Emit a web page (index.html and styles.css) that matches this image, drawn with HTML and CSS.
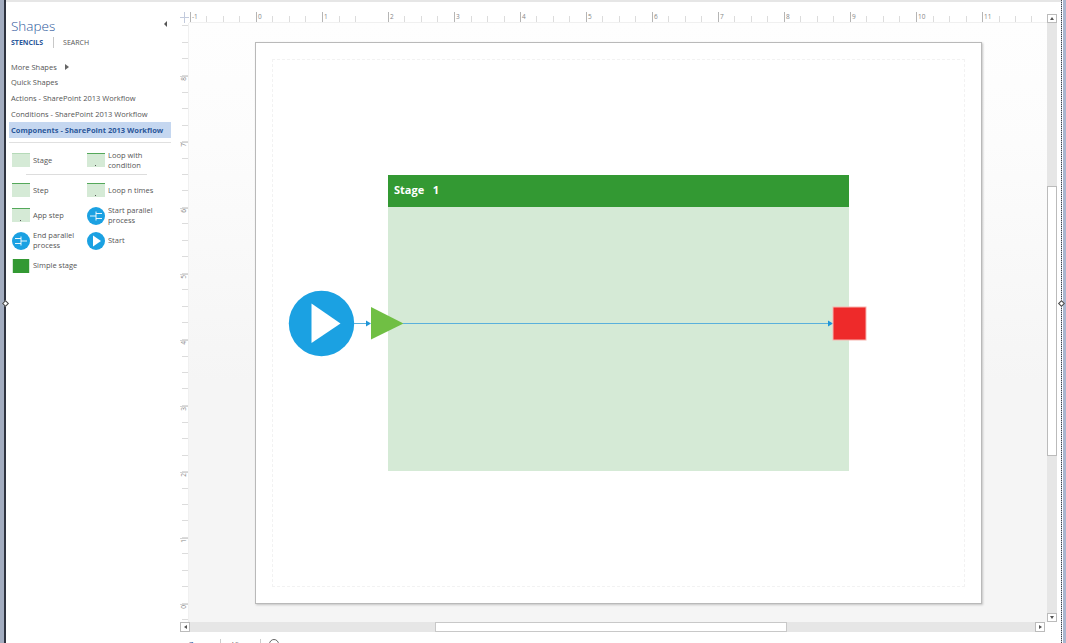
FILE: index.html
```html
<!DOCTYPE html>
<html>
<head>
    <title>Shapes - Workflow</title>
    <link rel="stylesheet" href="styles.css">
</head>
<body>
    <svg class="defs" width="0" height="0">
        <defs>
            <g id="box">
                <rect x="0" y="0" width="18" height="14" fill="#d5ead6"/>
                <rect x="0" y="0" width="18" height="1" fill="#b5dab8"/>
            </g>
            <g id="step">
                <rect x="0" y="1" width="18" height="13" fill="#d5ead6"/>
                <rect x="0" y="0" width="18" height="1" fill="#54a85a"/>
            </g>
            <g id="loop">
                <rect x="0" y="1" width="18" height="13" fill="#d5ead6"/>
                <rect x="0" y="0" width="18" height="1" fill="#54a85a"/>
                <rect x="8" y="12" width="1" height="1" fill="#555"/>
            </g>
        </defs>
    </svg>

    <div class="app">
        <div class="frame-left"></div>

        <div class="sidebar">
            <h1 class="title">Shapes</h1>
            <div class="tabs">
                <span class="tab tab-active">STENCILS</span>
                <span class="tab">SEARCH</span>
            </div>
            <span class="collapse"></span>

            <ul class="stencils">
                <li class="stencil">More Shapes <i class="more-arrow"></i></li>
                <li class="stencil">Quick Shapes</li>
                <li class="stencil">Actions - SharePoint 2013 Workflow</li>
                <li class="stencil">Conditions - SharePoint 2013 Workflow</li>
                <li class="stencil stencil-active">Components - SharePoint 2013 Workflow</li>
            </ul>

            <div class="masters">
                <div class="master">
                    <svg class="master-icon" width="18" height="15"><use href="#box"/></svg>
                    <span>Stage</span>
                </div>
                <div class="master">
                    <svg class="master-icon" width="18" height="15"><use href="#loop"/></svg>
                    <span>Loop with condition</span>
                </div>
                <div class="master-rule"></div>
                <div class="master">
                    <svg class="master-icon" width="18" height="15"><use href="#step"/></svg>
                    <span>Step</span>
                </div>
                <div class="master">
                    <svg class="master-icon" width="18" height="15"><use href="#loop"/></svg>
                    <span>Loop n times</span>
                </div>
                <div class="master">
                    <svg class="master-icon" width="18" height="15"><use href="#loop"/></svg>
                    <span>App step</span>
                </div>
                <div class="master">
                    <svg class="master-icon" width="18" height="18">
                        <circle cx="9" cy="9" r="9" fill="#1ba1e2"/>
                        <path d="M3 9 H9 M9 6.5 H15 M9 11.5 H15 M9 4.5 V13.5" stroke="#fff" stroke-width="0.9" fill="none"/>
                    </svg>
                    <span>Start parallel process</span>
                </div>
                <div class="master">
                    <svg class="master-icon" width="18" height="18">
                        <circle cx="9" cy="9" r="9" fill="#1ba1e2"/>
                        <path d="M3 6.5 H9 M3 11.5 H9 M9 9 H15 M9 4.5 V13.5" stroke="#fff" stroke-width="0.9" fill="none"/>
                    </svg>
                    <span>End parallel process</span>
                </div>
                <div class="master">
                    <svg class="master-icon" width="18" height="18">
                        <circle cx="9" cy="9" r="9" fill="#1ba1e2"/>
                        <path d="M6 3.5 L14 9 L6 14.5 Z" fill="#fff"/>
                    </svg>
                    <span>Start</span>
                </div>
                <div class="master">
                    <svg class="master-icon" width="18" height="14">
                        <rect width="18" height="14" fill="#d5ead6"/>
                        <rect x="1" y="0" width="16" height="14" fill="#339933"/>
                    </svg>
                    <span>Simple stage</span>
                </div>
            </div>
        </div>

        <div class="workspace">
            <div class="ruler-corner"></div>
            <div class="ruler-top">
                <div class="rt-cell"><span>-1</span></div>
                <div class="rt-cell"><span>0</span></div>
                <div class="rt-cell"><span>1</span></div>
                <div class="rt-cell"><span>2</span></div>
                <div class="rt-cell"><span>3</span></div>
                <div class="rt-cell"><span>4</span></div>
                <div class="rt-cell"><span>5</span></div>
                <div class="rt-cell"><span>6</span></div>
                <div class="rt-cell"><span>7</span></div>
                <div class="rt-cell"><span>8</span></div>
                <div class="rt-cell"><span>9</span></div>
                <div class="rt-cell"><span>10</span></div>
                <div class="rt-cell"><span>11</span></div>
            </div>
            <div class="vscroll">
                <div class="sb-btn"><i class="arr arr-up"></i></div>
                <div class="vtrack"><div class="vthumb"></div></div>
                <div class="sb-btn"><i class="arr arr-down"></i></div>
            </div>

            <div class="ruler-left">
                <div class="rl-cell rl-first"></div>
                <div class="rl-cell"><span>8</span></div>
                <div class="rl-cell"><span>7</span></div>
                <div class="rl-cell"><span>6</span></div>
                <div class="rl-cell"><span>5</span></div>
                <div class="rl-cell"><span>4</span></div>
                <div class="rl-cell"><span>3</span></div>
                <div class="rl-cell"><span>2</span></div>
                <div class="rl-cell"><span>1</span></div>
                <div class="rl-cell"><span>0</span></div>
            </div>

            <div class="canvas">
                <div class="page">
                    <div class="page-margin"></div>

                    <!-- diagram nodes -->
                    <div class="stage">
                        <div class="stage-head">Stage&nbsp;&nbsp; 1</div>
                    </div>
                    <svg class="wires" width="725" height="560" viewBox="256 43 725 560">
                        <circle cx="321.5" cy="323.5" r="32.7" fill="#1ba1e2"/>
                        <path d="M311.5 303.5 L340.5 323.5 L311.5 343 Z" fill="#fff"/>
                        <path d="M354 323.5 H367" stroke="#5ab0dc" stroke-width="1"/>
                        <path d="M366 320.5 L371 323.5 L366 326.5 Z" fill="#1f96d8"/>
                        <path d="M371 307 L403.5 323.5 L371 339.5 Z" fill="#70bf44"/>
                        <path d="M403 323.5 H829" stroke="#5ab0dc" stroke-width="1"/>
                        <path d="M828 320.5 L833 323.5 L828 326.5 Z" fill="#1f96d8"/>
                        <rect x="833" y="307" width="33" height="33" fill="#ee2a2a" stroke="#f7b5b0" stroke-width="1"/>
                    </svg>
                </div>
            </div>

            <div class="hscroll">
                <div class="sb-btn"><i class="arr arr-left"></i></div>
                <div class="htrack"><div class="hthumb"></div></div>
                <div class="sb-btn"><i class="arr arr-right"></i></div>
            </div>
            <div class="status">
                <span class="status-link">Zoom</span>
                <span class="status-item">View</span>
                <i class="status-circle"></i>
            </div>
        </div>

        <div class="frame-right"></div>
        <i class="handle handle-left"></i>
        <i class="handle handle-right"></i>
    </div>
</body>
</html>
```

FILE: styles.css
```css
* {
    box-sizing: border-box;
}
html, body {
    margin: 0;
    height: 100%;
    overflow: hidden;
    background: #fff;
}
body {
    font-family: "Open Sans", "Noto Sans", sans-serif;
    font-size: 7.5px;
    color: #555;
}
.defs {
    display: block;
    height: 0;
}
.app {
    position: relative;
    display: flex;
    width: 1066px;
    height: 643px;
    border-top: 2px solid #e6e6e6;
}

/* window edges */
.frame-left {
    flex: none;
    width: 6px;
    margin-top: -2px;
    background: #a3adc0;
    border-right: 2px solid #2f3440;
}
.frame-right {
    flex: none;
    width: 5px;
    margin: -2px 0 0 3px;
    border-left: 1px dotted #444;
    background: linear-gradient(90deg, #fff 0 1px, #a9b6cf 1px);
}
.handle {
    position: absolute;
    top: 299px;
    width: 5px;
    height: 5px;
    background: #fff;
    border: 1px solid #444;
    transform: rotate(45deg);
}
.handle-left { left: 3px; }
.handle-right { left: 1059px; }

/* shapes pane */
.sidebar {
    position: relative;
    flex: none;
    width: 174px;
    padding: 15px 0 0 3px;
}
.title {
    margin: 0 0 0 2px;
    font-size: 13.5px;
    font-weight: 300;
    line-height: 19px;
    color: #2b579a;
}
.tabs {
    display: flex;
    margin: 1px 0 0 2px;
    line-height: 11px;
    font-size: 7px;
}
.tab-active {
    font-weight: 700;
    color: #2b579a;
    padding-right: 10px;
    margin-right: 9px;
    border-right: 1px solid #c8c8c8;
}
.collapse {
    position: absolute;
    left: 155px;
    top: 19px;
    width: 0;
    height: 0;
    border: 3px solid transparent;
    border-right: 3px solid #555;
}
.stencils {
    list-style: none;
    margin: 11px 0 0;
    padding: 0 0 4px;
    width: 162px;
    border-bottom: 1px solid #e0e0e0;
}
.stencil {
    height: 16px;
    padding-left: 2px;
    line-height: 17px;
    white-space: nowrap;
}
.stencil:first-child {
    height: 15px;
}
.more-arrow {
    display: inline-block;
    width: 0;
    height: 0;
    margin-left: 6px;
    border: 3px solid transparent;
    border-left: 4px solid #666;
    border-right: 0;
}
.stencil-active {
    background: #c5d7f0;
    color: #2b579a;
    font-weight: 700;
    font-size: 7.5px;
}
.masters {
    display: grid;
    grid-template-columns: 75px 86px;
    grid-template-rows: 25px 5px repeat(4, 25px);
    margin: 5px 0 0 3px;
}
.master {
    display: flex;
    align-items: center;
    line-height: 9.5px;
}
.master span {
    margin-left: 3px;
    width: 60px;
}
.master-icon {
    flex: none;
}
.master-rule {
    grid-column: 1 / -1;
    margin: 1px 26px 0 14px;
    border-top: 1px solid #ddd;
}

/* drawing area */
.workspace {
    flex: none;
    display: grid;
    grid-template-columns: 9px 858px 11px;
    grid-template-rows: 11px 599px 10px 1fr;
    width: 878px;
    margin-top: 10px;
}
.ruler-corner {
    grid-column: 1;
    background:
        linear-gradient(#c3cbdd, #c3cbdd) center / 1px 100% no-repeat,
        linear-gradient(#c3cbdd, #c3cbdd) center / 100% 1px no-repeat;
}
.ruler-top {
    display: flex;
    overflow: hidden;
    border-bottom: 1px solid #f0f0f0;
    padding-left: 1px;
}
.rt-cell {
    flex: none;
    position: relative;
    width: 66px;
    border-left: 1px solid #b5b5b5;
    background: repeating-linear-gradient(90deg, transparent 0 15.5px, #dcdcdc 15.5px 16.5px) 0 100% / 100% 6px no-repeat;
}
.rt-cell span {
    position: absolute;
    left: 1px;
    top: 0;
    font-size: 6.5px;
    line-height: 9px;
    color: #888;
}
.ruler-left {
    overflow: hidden;
    border-right: 1px solid #f0f0f0;
}
.rl-cell {
    position: relative;
    height: 66px;
    background:
        linear-gradient(#d4d4d4, #d4d4d4) 0 0 / 100% 1px no-repeat,
        repeating-linear-gradient(180deg, transparent 0 15.5px, #dcdcdc 15.5px 16.5px) 100% 0 / 6px 100% no-repeat;
}
.rl-first {
    margin-top: -13px;
}
.rl-cell span {
    position: absolute;
    left: 0;
    top: 1px;
    font-size: 6.5px;
    line-height: 8px;
    color: #888;
    writing-mode: vertical-rl;
    transform: rotate(180deg);
}
.canvas {
    padding: 19px 0 0 66px;
    background: linear-gradient(#fefefe 0, #fcfcfc 20%, #f5f5f5 60%);
}
.page {
    position: relative;
    width: 727px;
    height: 562px;
    background: #fff;
    border: 1px solid #b9b9b9;
    box-shadow: 1px 1px 2px #c4c4c4;
}
.page-margin {
    position: absolute;
    left: 16px;
    top: 16px;
    right: 16px;
    bottom: 16px;
    border: 1px dashed #f2f2f2;
}
.stage {
    position: absolute;
    left: 132px;
    top: 132px;
    width: 461px;
    height: 296px;
    background: #d5ead6;
}
.stage-head {
    height: 32px;
    padding-left: 6px;
    background: #339933;
    color: #fff;
    font-size: 11px;
    font-weight: 700;
    line-height: 30px;
}
.wires {
    position: absolute;
    left: 0;
    top: 0;
}

/* scroll bars */
.vscroll {
    grid-column: 3;
    grid-row: 1 / 4;
    display: flex;
    flex-direction: column;
    width: 10px;
    padding-top: 2px;
    height: 610px;
}
.vtrack {
    flex: 1;
    padding-top: 163px;
    background: #e6e6e6;
}
.vthumb {
    height: 270px;
    background: #fff;
    border: 1px solid #bbb;
}
.sb-btn {
    flex: none;
    display: flex;
    align-items: center;
    justify-content: center;
    width: 10px;
    height: 9px;
    background: #fff;
    border: 1px solid #bbb;
}
.hscroll {
    grid-column: 1 / 3;
    display: flex;
    width: 865px;
}
.hscroll .sb-btn {
    height: 10px;
}
.htrack {
    flex: 1;
    padding-left: 245px;
    background: #e6e6e6;
}
.hthumb {
    width: 352px;
    height: 10px;
    background: #fff;
    border: 1px solid #c8c8c8;
}
.arr {
    display: block;
    width: 0;
    height: 0;
    border: 2px solid transparent;
}
.arr-up { border-bottom: 3px solid #555; border-top: 0; }
.arr-down { border-top: 3px solid #555; border-bottom: 0; }
.arr-left { border-right: 3px solid #555; border-left: 0; }
.arr-right { border-left: 3px solid #555; border-right: 0; }

/* status line, cut off by the window */
.status {
    grid-column: 1 / -1;
    display: flex;
    align-items: flex-start;
    padding: 7px 0 0 9px;
    line-height: 10px;
    overflow: hidden;
}
.status-link {
    color: #2b579a;
    padding-right: 11px;
    border-right: 1px solid #ccc;
}
.status-item {
    padding: 0 11px;
    border-right: 1px solid #ccc;
}
.status-circle {
    display: block;
    width: 10px;
    height: 10px;
    margin: 0 0 0 8px;
    border: 1px solid #666;
    border-radius: 50%;
}
```
